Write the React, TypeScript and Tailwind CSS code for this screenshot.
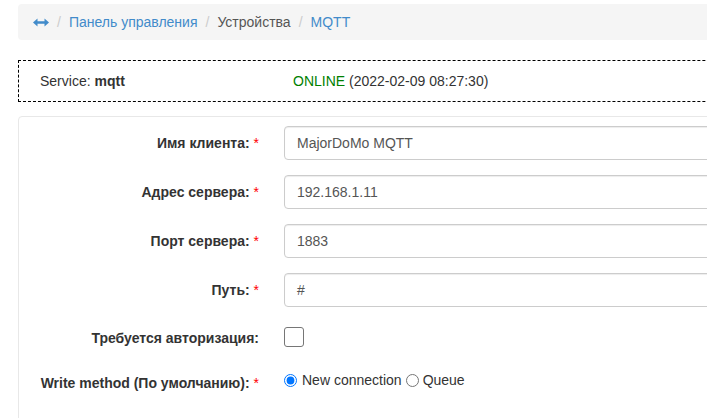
import React from "react";

const Req = () => <span className="font-normal text-[#ff0000]"> *</span>;

function InputRow({ label, value }: { label: string; value: string }) {
  return (
    <div className="flex items-start h-[34px] mb-[15px]">
      <div className="w-[240px] shrink-0 text-right font-bold leading-5 pt-[7px] text-[#333]">
        {label}
        <Req />
      </div>
      <div className="ml-[25px] w-[600px] h-[34px] border border-[#cccccc] rounded-[4px] px-[12px] flex items-center text-[#555] shadow-[inset_0_1px_1px_rgba(0,0,0,0.075)]">
        {value}
      </div>
    </div>
  );
}

export default function App() {
  return (
    <div
      className="w-[707px] h-[418px] overflow-hidden bg-white text-[14px] text-[#333]"
      style={{ fontFamily: '"Liberation Sans", Arial, sans-serif' }}
    >
      <div className="w-[1100px] pl-[18px] pt-[4px]">
        {/* breadcrumb */}
        <div className="h-[36px] bg-[#f5f5f5] rounded-[4px] px-[15px] flex items-center leading-5">
          <svg width="16" height="9" viewBox="0 0 16 9" className="text-[#428bca]">
            <path d="M0 4.5 L4.5 0.5 L4.5 3.2 L11.5 3.2 L11.5 0.5 L16 4.5 L11.5 8.5 L11.5 5.8 L4.5 5.8 L4.5 8.5 Z" fill="currentColor" />
          </svg>
          <span className="text-[#cccccc] px-[8px]">/</span>
          <span className="text-[#428bca]">Панель управления</span>
          <span className="text-[#cccccc] px-[8px]">/</span>
          <span className="text-[#555]">Устройства</span>
          <span className="text-[#cccccc] px-[8px]">/</span>
          <span className="text-[#428bca]">MQTT</span>
        </div>

        {/* service status */}
        <div className="mt-[20px] h-[42px] border border-dashed border-black flex items-center leading-5">
          <div className="w-[274px] pl-[21px]">
            Service: <b>mqtt</b>
          </div>
          <div>
            <span className="text-[#008000]">ONLINE</span> (2022-02-09 08:27:30)
          </div>
        </div>

        {/* form card */}
        <div className="mt-[14px] h-[320px] border border-[#e8e8e8] rounded-[4px] pt-[9px]">
          <InputRow label="Имя клиента:" value="MajorDoMo MQTT" />
          <InputRow label="Адрес сервера:" value="192.168.1.11" />
          <InputRow label="Порт сервера:" value="1883" />
          <InputRow label="Путь:" value="#" />

          <div className="flex items-start h-[29px] mb-[15px]">
            <div className="w-[240px] shrink-0 text-right font-bold leading-5 pt-[6px] text-[#333]">
              Требуется авторизация:
            </div>
            <div className="ml-[25px] mt-[5px] w-[20px] h-[20px] border border-[#767676] rounded-[3px] bg-white" />
          </div>

          <div className="flex items-start">
            <div className="w-[240px] shrink-0 text-right font-bold leading-5 pt-[7px] text-[#333]">
              Write method (По умолчанию):
              <Req />
            </div>
            <div className="ml-[25px] pt-[4px] flex items-center leading-5">
              <input type="radio" name="wm" defaultChecked className="m-0 w-[13px] h-[13px] mr-[5px]" />
              <span>New connection</span>
              <input type="radio" name="wm" className="m-0 w-[13px] h-[13px] ml-[4px] mr-[4px]" />
              <span>Queue</span>
            </div>
          </div>
        </div>
      </div>
    </div>
  );
}
